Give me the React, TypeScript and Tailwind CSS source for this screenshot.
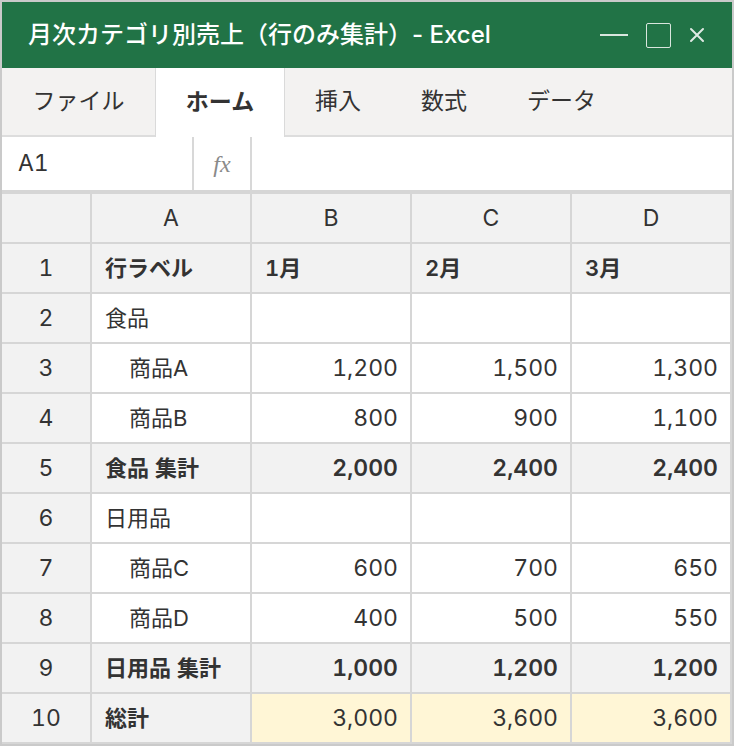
import React from "react";

const FONT = { fontFamily: 'Inter, "Noto Sans CJK JP", sans-serif' };

type Row = {
  n: number;
  a: string;
  vals: string[];
  kind: "label" | "group" | "item" | "subtotal" | "total";
};

const rows: Row[] = [
  { n: 1, a: "行ラベル", vals: ["1月", "2月", "3月"], kind: "label" },
  { n: 2, a: "食品", vals: ["", "", ""], kind: "group" },
  { n: 3, a: "商品A", vals: ["1,200", "1,500", "1,300"], kind: "item" },
  { n: 4, a: "商品B", vals: ["800", "900", "1,100"], kind: "item" },
  { n: 5, a: "食品 集計", vals: ["2,000", "2,400", "2,400"], kind: "subtotal" },
  { n: 6, a: "日用品", vals: ["", "", ""], kind: "group" },
  { n: 7, a: "商品C", vals: ["600", "700", "650"], kind: "item" },
  { n: 8, a: "商品D", vals: ["400", "500", "550"], kind: "item" },
  { n: 9, a: "日用品 集計", vals: ["1,000", "1,200", "1,200"], kind: "subtotal" },
  { n: 10, a: "総計", vals: ["3,000", "3,600", "3,600"], kind: "total" },
];

export default function App() {
  return (
    <div
      className="w-[734px] h-[746px] border-2 border-[#cacaca] bg-white flex flex-col text-[#333333]"
      style={FONT}
    >
      {/* Title bar */}
      <div className="h-[66px] bg-[#217346] flex items-center pl-[26px] pr-[26px] text-white">
        <div className="text-[24px] font-medium">月次カテゴリ別売上（行のみ集計）- Excel</div>
        <div className="ml-auto flex items-center">
          <div className="w-[28px] h-[2px] bg-[#d9e6de] mr-[18px]" />
          <div className="w-[25px] h-[25px] border-[1.5px] border-[#d9e6de] rounded-[2px] mr-[18px]" />
          <svg width="16" height="16" viewBox="0 0 16 16" className="mr-[1px]">
            <path d="M2 2 L14 14 M14 2 L2 14" stroke="#dfe9e3" strokeWidth="2" strokeLinecap="round" />
          </svg>
        </div>
      </div>

      {/* Tabs */}
      <div className="h-[69px] bg-[#f3f2f1] border-b-2 border-[#dddddd] flex items-stretch text-[23px] text-[#333333]">
        <div className="w-[153px] flex items-center justify-center">ファイル</div>
        <div className="w-[130px] flex items-center justify-center bg-white border-x border-[#dadada] font-bold mb-[-2px]">
          ホーム
        </div>
        <div className="w-[106px] flex items-center justify-center">挿入</div>
        <div className="w-[106px] flex items-center justify-center">数式</div>
        <div className="pl-[30px] flex items-center">データ</div>
      </div>

      {/* Formula bar */}
      <div className="h-[53px] bg-white flex items-stretch">
        <div className="w-[192px] flex items-center pl-[16px] text-[23px] tabular-nums border-r-2 border-[#d8d8d8]">
          A1
        </div>
        <div
          className="w-[58px] flex items-center justify-center text-[24px] italic text-[#8a8a8a] border-r-2 border-[#d8d8d8]"
          style={{ fontFamily: '"Liberation Serif", serif' }}
        >
          fx
        </div>
        <div className="flex-1" />
      </div>

      {/* Grid */}
      <div className="flex-1 bg-[#d6d6d6] pt-[4px] pr-[2px] pb-[2px]">
        <div className="grid grid-cols-[88px_158px_158px_158px_158px] auto-rows-[48px] gap-[2px] text-[23px] tabular-nums">
          <div className="bg-[#f2f2f2]" />
          {["A", "B", "C", "D"].map((c) => (
            <div key={c} className="bg-[#f2f2f2] flex items-center justify-center">
              {c}
            </div>
          ))}
          {rows.map((r) => {
            const grey = r.kind === "label" || r.kind === "subtotal";
            const bold = r.kind === "label" || r.kind === "subtotal" || r.kind === "total";
            const aBg = grey || r.kind === "total" ? "bg-[#f2f2f2]" : "bg-white";
            const vBg =
              r.kind === "total" ? "bg-[#fff6d6]" : grey ? "bg-[#f2f2f2]" : "bg-white";
            return (
              <React.Fragment key={r.n}>
                <div className="bg-[#f2f2f2] flex items-center justify-center">{r.n}</div>
                <div
                  className={`${aBg} flex items-center text-[22px] ${
                    r.kind === "item" ? "pl-[37px]" : "pl-[13px]"
                  } ${bold ? "font-semibold" : ""}`}
                >
                  {r.a}
                </div>
                {r.vals.map((v, i) => (
                  <div
                    key={i}
                    className={`${vBg} flex items-center ${
                      r.kind === "label"
                        ? "justify-start pl-[13px] font-semibold text-[22px]"
                        : "justify-end pr-[12px]"
                    } ${r.kind === "subtotal" ? "font-semibold" : ""}`}
                  >
                    {v}
                  </div>
                ))}
              </React.Fragment>
            );
          })}
        </div>
      </div>
    </div>
  );
}
